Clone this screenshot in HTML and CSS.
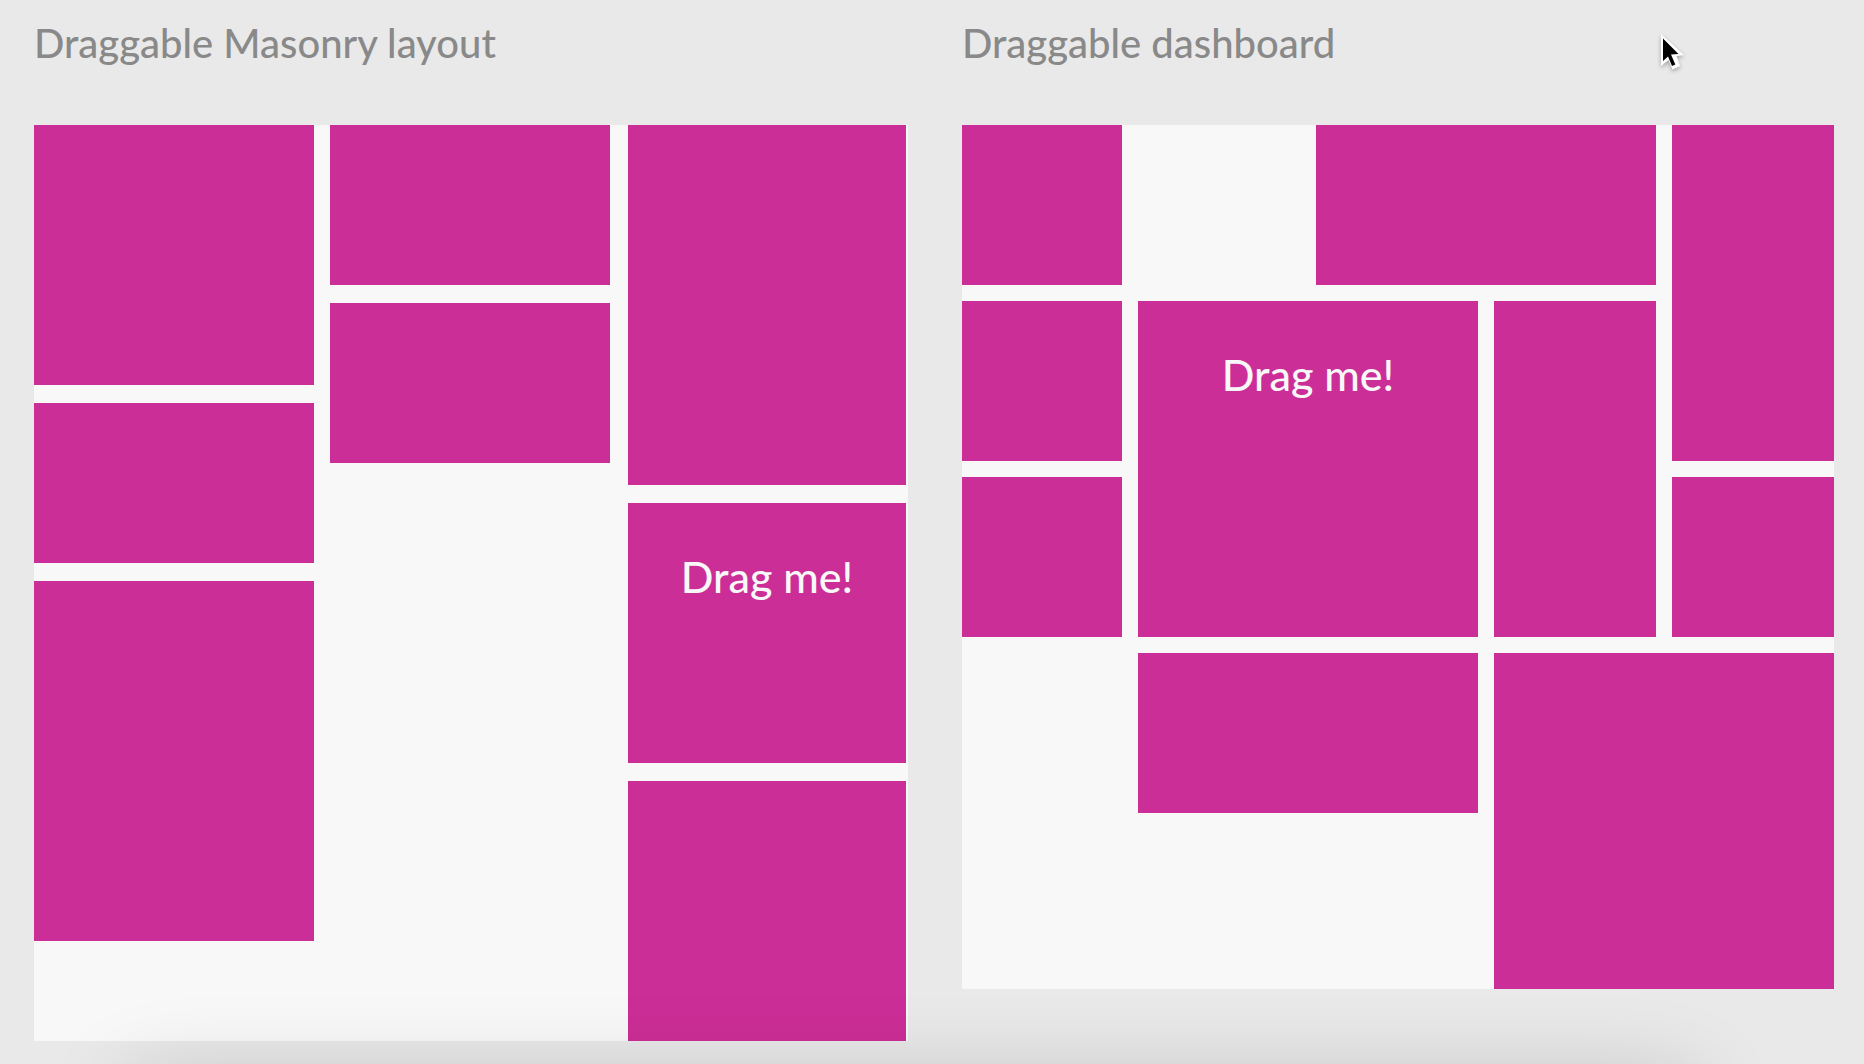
FILE: index.html
```html
<!DOCTYPE html>
<html lang="en">
<head>
  <meta charset="utf-8">
  <meta name="viewport" content="width=device-width, initial-scale=1">
  <title>Draggable layouts</title>
  <link rel="stylesheet" href="styles.css">
</head>
<body>
  <main class="demos">
    <section class="demo">
      <h2 class="demo-title">Draggable Masonry layout</h2>
      <div class="board masonry">
        <div class="masonry-column">
          <div class="tile tile-medium"></div>
          <div class="tile tile-short"></div>
          <div class="tile tile-tall"></div>
        </div>
        <div class="masonry-column masonry-column-middle">
          <div class="tile tile-short"></div>
          <div class="tile tile-short"></div>
        </div>
        <div class="masonry-column">
          <div class="tile tile-tall"></div>
          <div class="tile tile-medium">Drag me!</div>
          <div class="tile tile-medium"></div>
        </div>
      </div>
    </section>

    <section class="demo">
      <h2 class="demo-title">Draggable dashboard</h2>
      <div class="board dashboard">
        <div class="tile col-1 row-1"></div>
        <div class="tile col-3 row-1 wide"></div>
        <div class="tile col-5 row-1 high"></div>
        <div class="tile col-1 row-2"></div>
        <div class="tile col-2 row-2 wide high">Drag me!</div>
        <div class="tile col-4 row-2 high"></div>
        <div class="tile col-1 row-3"></div>
        <div class="tile col-5 row-3"></div>
        <div class="tile col-2 row-4 wide"></div>
        <div class="tile col-4 row-4 wide high"></div>
      </div>
    </section>
  </main>

  <div class="bottom-shadow" aria-hidden="true"></div>
  <svg class="pointer" viewBox="0 0 26 40" aria-hidden="true">
    <path d="M1 0 L24 21 L16.500 22 L20 32 L12.500 35.500 L8.500 26 L1 32 Z" fill="#fff"/>
    <path d="M3 4.500 L18.500 20 L11 20.500 L15.300 30.500 L12 32 L8 22.500 L3 27 Z" fill="#000"/>
  </svg>
</body>
</html>
```

FILE: styles.css
```css
* {
  box-sizing: border-box;
}

body {
  margin: 0;
  background: #e9e9e9;
  color: #898989;
  font-family: Lato, "Open Sans", sans-serif;
  font-weight: 500;
}

.demos {
  display: grid;
  grid-template-columns: 874fr 872fr;
  column-gap: 54px;
  align-items: start;
  padding: 19px 30px 20px 34px;
}

.demo-title {
  margin: 0 0 58px;
  font-size: 40px;
  line-height: 48px;
  font-weight: 500;
}

.board {
  display: grid;
  background: #f8f8f8;
}

.masonry {
  grid-template-columns: 280fr 282fr 278fr;
  column-gap: 16px;
  padding-right: 2px;
}

.masonry-column {
  display: flex;
  flex-direction: column;
  gap: 18px;
}

.masonry-column-middle {
  padding-right: 2px;
}

.tile {
  padding-top: 48px;
  background: #cc2e97;
  color: #f8f8f8;
  font-size: 43px;
  line-height: 52px;
  text-align: center;
}

.tile-short { height: 160px; }
.tile-medium { height: 260px; }
.tile-tall { height: 360px; }

.dashboard {
  grid-template-columns: 160fr repeat(4, 162fr);
  grid-template-rows: repeat(5, 160px);
  gap: 16px;
}

.col-1 { grid-column-start: 1; }
.col-2 { grid-column-start: 2; }
.col-3 { grid-column-start: 3; }
.col-4 { grid-column-start: 4; }
.col-5 { grid-column-start: 5; }
.row-1 { grid-row-start: 1; }
.row-2 { grid-row-start: 2; }
.row-3 { grid-row-start: 3; }
.row-4 { grid-row-start: 4; }
.wide { grid-column-end: span 2; }
.high { grid-row-end: span 2; }

/* Soft shade along the bottom edge of the window */
.bottom-shadow {
  position: fixed;
  top: 100%;
  left: 130px;
  right: 170px;
  height: 200px;
  margin-top: 20px;
  box-shadow: 0 0 90px rgba(0, 0, 0, 0.2);
  pointer-events: none;
}

.pointer {
  position: absolute;
  top: 34px;
  right: 178px;
  width: 26px;
  height: 40px;
  filter: drop-shadow(0 2px 2px rgba(0, 0, 0, 0.3));
  pointer-events: none;
}
```
